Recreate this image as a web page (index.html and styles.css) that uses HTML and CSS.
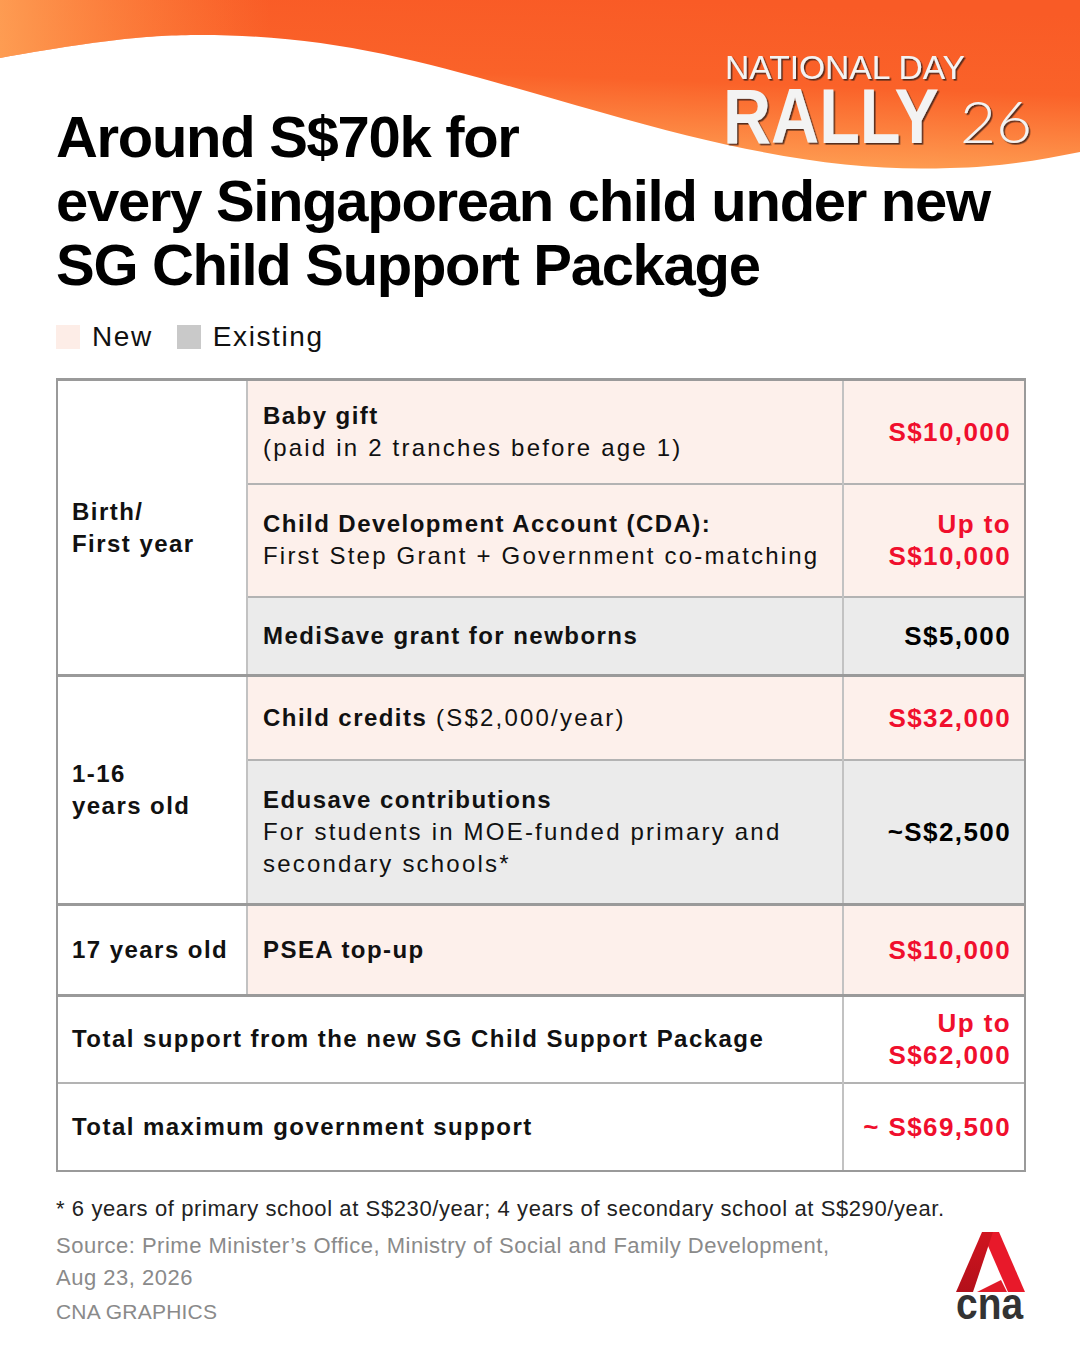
FILE: index.html
```html
<!DOCTYPE html>
<html lang="en">
<head>
<meta charset="utf-8">
<title>SG Child Support Package</title>
<link rel="stylesheet" href="styles.css">
</head>
<body>
<div class="page">
  <svg class="banner" width="1080" height="180" viewBox="0 0 1080 180">
    <defs>
      <linearGradient id="bg" x1="0.62" y1="0" x2="0.38" y2="1">
        <stop offset="0" stop-color="#f95b26"/>
        <stop offset="0.45" stop-color="#fa6229"/>
        <stop offset="1" stop-color="#ffa95a"/>
      </linearGradient>
      <linearGradient id="bg2" x1="0" y1="0" x2="1" y2="0">
        <stop offset="0" stop-color="#ffb060" stop-opacity="0.75"/>
        <stop offset="0.25" stop-color="#ff9a4a" stop-opacity="0"/>
      </linearGradient>
      <filter id="sh" x="-5%" y="-10%" width="110%" height="130%">
        <feDropShadow dx="1.6" dy="1.6" stdDeviation="0.35" flood-color="#3a2116" flood-opacity="0.85"/>
      </filter>
    </defs>
    <path d="M0,0 H1080 V152 C1040,160 1000,167 950,168 C850,172 750,155 600,112 C450,70 350,35 200,35 C150,35 100,40 0,58 Z" fill="url(#bg)"/>
    <path d="M0,0 H1080 V152 C1040,160 1000,167 950,168 C850,172 750,155 600,112 C450,70 350,35 200,35 C150,35 100,40 0,58 Z" fill="url(#bg2)"/>
    <g class="logo" filter="url(#sh)">
      <text class="nd" x="725" y="79" textLength="240" lengthAdjust="spacingAndGlyphs">NATIONAL DAY</text>
      <text class="rally" transform="translate(723 143) scale(1 1.156)" x="0" y="0">RALLY</text>
      <text class="yr" x="960" y="143" textLength="72" lengthAdjust="spacingAndGlyphs">26</text>
    </g>
  </svg>

  <h1 class="title">Around S$70k for<br>every Singaporean child under new<br>SG Child Support Package</h1>

  <div class="legend">
    <span class="swatch swatch-new"></span><span class="legend-label">New</span>
    <span class="swatch swatch-old"></span><span class="legend-label">Existing</span>
  </div>

  <table class="tbl">
    <colgroup>
      <col class="c1"><col class="c2"><col class="c3">
    </colgroup>
    <tbody>
      <tr class="r1 first">
        <td class="age" rowspan="3">Birth/<br>First year</td>
        <td class="item new"><b>Baby gift</b><br>(paid in 2 tranches before age 1)</td>
        <td class="amt new red">S$10,000</td>
      </tr>
      <tr class="r2">
        <td class="item new"><b>Child Development Account (CDA):</b><br>First Step Grant + Government co-matching</td>
        <td class="amt new red">Up to<br>S$10,000</td>
      </tr>
      <tr class="r3">
        <td class="item old"><b>MediSave grant for newborns</b></td>
        <td class="amt old">S$5,000</td>
      </tr>
      <tr class="r4 group">
        <td class="age" rowspan="2">1-16<br>years old</td>
        <td class="item new"><b>Child credits</b> (S$2,000/year)</td>
        <td class="amt new red">S$32,000</td>
      </tr>
      <tr class="r5">
        <td class="item old"><b>Edusave contributions</b><br>For students in MOE-funded primary and<br>secondary schools*</td>
        <td class="amt old">~S$2,500</td>
      </tr>
      <tr class="r6 group">
        <td class="age">17 years old</td>
        <td class="item new"><b>PSEA top-up</b></td>
        <td class="amt new red">S$10,000</td>
      </tr>
      <tr class="r7 group">
        <td class="total" colspan="2">Total support from the new SG Child Support Package</td>
        <td class="amt red">Up to<br>S$62,000</td>
      </tr>
      <tr class="r8">
        <td class="total" colspan="2">Total maximum government support</td>
        <td class="amt red">~ S$69,500</td>
      </tr>
    </tbody>
  </table>

  <p class="note">* 6 years of primary school at S$230/year; 4 years of secondary school at S$290/year.</p>

  <div class="footer">
    <div class="credits">
      <p class="source">Source: Prime Minister’s Office, Ministry of Social and Family Development,<br>Aug 23, 2026</p>
      <p class="byline">CNA GRAPHICS</p>
    </div>
    <svg class="cna" width="72" height="100" viewBox="0 0 72 100">
      <defs>
        <linearGradient id="aleft" x1="0" y1="0" x2="0" y2="1">
          <stop offset="0" stop-color="#d0141f"/>
          <stop offset="1" stop-color="#b3101a"/>
        </linearGradient>
      </defs>
      <polygon points="28,1 45,1 71,61 54,61" fill="#e8192a"/>
      <polygon points="28,1 39,1 19,61 2,61" fill="url(#aleft)"/>
      <polygon points="23,61 47,49 53,61" fill="#e01b28"/>
      <text class="cna-word" transform="translate(2 88) scale(1 1.13)" x="0" y="0">cna</text>
    </svg>
  </div>
</div>
</body>
</html>
```

FILE: styles.css
```css
html, body {
  margin: 0;
  padding: 0;
  background: #ffffff;
}

body {
  font-family: "Liberation Sans", Arial, sans-serif;
  color: #000;
}

.page {
  position: relative;
  width: 1080px;
  height: 1350px;
  box-sizing: border-box;
  padding: 105px 56px 0 56px;
  overflow: hidden;
}

.banner {
  position: absolute;
  top: 0;
  left: 0;
  display: block;
}

.logo text {
  font-family: "Liberation Sans", Arial, sans-serif;
  fill: #f3f3f3;
}

.logo .nd {
  font-size: 33px;
  font-weight: 400;
}

.logo .rally {
  font-size: 66.6px;
  font-weight: 700;
}

.logo .yr {
  font-family: "Lato", "Roboto", "Liberation Sans", sans-serif;
  font-size: 57px;
  font-weight: 300;
}

.title {
  position: relative;
  margin: 0;
  font-family: "Liberation Sans", Arial, sans-serif;
  font-weight: 700;
  font-size: 58px;
  line-height: 64px;
  letter-spacing: -1.3px;
  color: #000;
}

.legend {
  display: flex;
  align-items: center;
  margin-top: 24px;
  height: 32px;
}

.swatch {
  width: 24px;
  height: 24px;
  flex: none;
}

.swatch-new {
  background: #fdede7;
}

.swatch-old {
  background: #c9c9c9;
  margin-left: 24px;
}

.legend-label {
  margin-left: 12px;
  font-size: 28px;
  line-height: 32px;
  letter-spacing: 1.6px;
  color: #111;
}

.tbl {
  margin-top: 25px;
  width: 968px;
  border-collapse: collapse;
  table-layout: fixed;
  font-family: "Liberation Sans", Arial, sans-serif;
  font-size: 24px;
  line-height: 32px;
  letter-spacing: 2.2px;
  color: #111;
}

.c1 { width: 190px; }
.c2 { width: 596px; }
.c3 { width: 182px; }

.tbl td {
  padding: 0;
  vertical-align: middle;
  border-top: 2px solid #b3b3b3;
  border-left: 2px solid #c2c2c2;
  border-right: 2px solid #c2c2c2;
  background: #fff;
}

.tbl td:first-child {
  border-left: 2px solid #9a9a9a;
}

.tbl td:last-child {
  border-right: 2px solid #9a9a9a;
}

.tbl tr.first td,
.tbl tr.group td {
  border-top: 3px solid #9a9a9a;
}

.tbl tr.r8 td {
  border-bottom: 2px solid #9a9a9a;
}

.tbl tr.r1 { height: 104px; }
.tbl tr.r2 { height: 113px; }
.tbl tr.r3 { height: 79px; }
.tbl tr.r4 { height: 84px; }
.tbl tr.r5 { height: 145px; }
.tbl tr.r6 { height: 91px; }
.tbl tr.r7 { height: 87px; }
.tbl tr.r8 { height: 88px; }

.tbl b,
.age,
.total {
  font-weight: 700;
  letter-spacing: 1.45px;
}

.age {
  padding-left: 14px !important;
}

.item {
  padding-left: 15px !important;
  font-weight: 400;
}

.total {
  padding-left: 14px !important;
}

.new {
  background: #fdf0eb !important;
}

.old {
  background: #ebebeb !important;
}

.amt {
  text-align: right;
  padding-right: 13px !important;
  font-weight: 700;
  font-size: 26px;
  letter-spacing: 1.4px;
  color: #000;
}

.amt.red {
  color: #f00f2d;
}

.note {
  margin: 21px 0 0 0;
  font-size: 22px;
  line-height: 32px;
  letter-spacing: 0.6px;
  color: #222;
}

.footer {
  display: flex;
  justify-content: space-between;
  align-items: flex-start;
  margin-top: 5px;
}

.credits p {
  margin: 0;
  font-size: 22px;
  line-height: 32px;
  letter-spacing: 0.5px;
  color: #8a8a8a;
}

.credits .byline {
  margin-top: 2px;
  font-size: 21px;
  letter-spacing: 0.2px;
}

.cna {
  display: block;
  flex: none;
  margin-top: 1px;
  margin-right: -2px;
}

.cna-word {
  font-family: "Liberation Sans", Arial, sans-serif;
  font-weight: 700;
  font-size: 38.9px;
  fill: #333333;
}
```
